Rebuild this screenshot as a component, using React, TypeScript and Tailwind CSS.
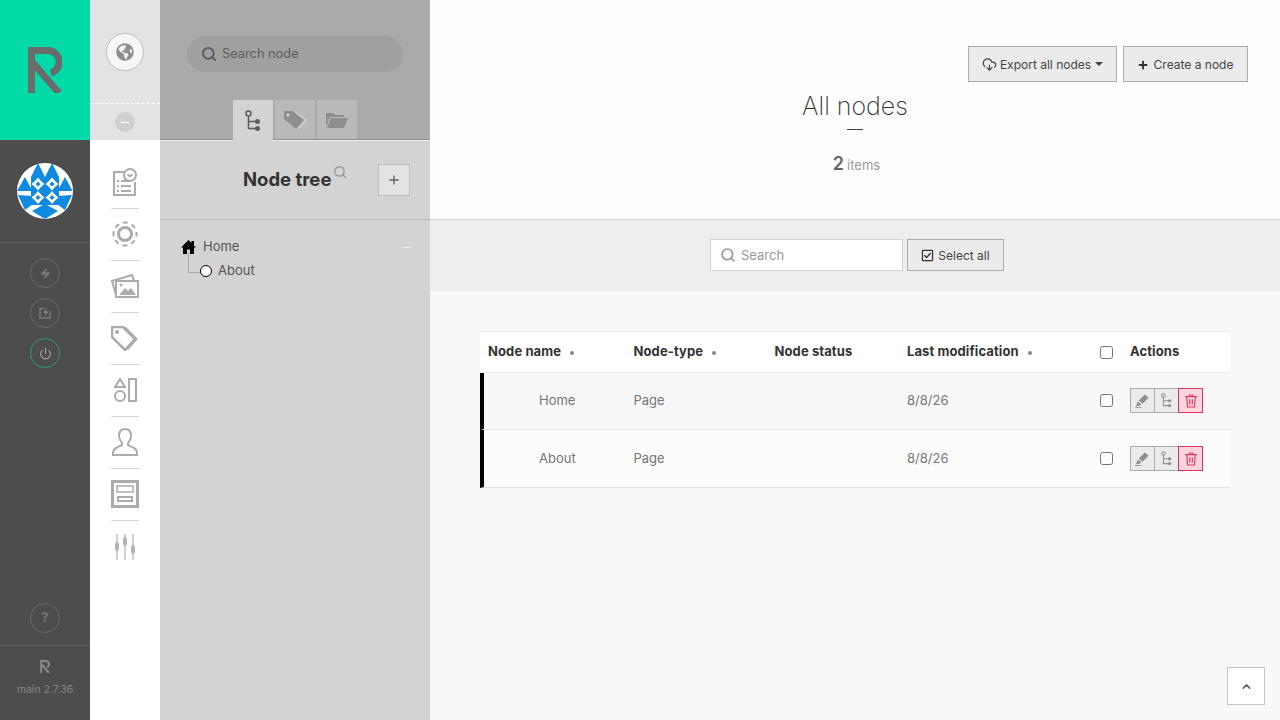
import { ChevronUp, CloudDownload, Plus, Power, Search, Zap } from "lucide-react";
import { FaGlobeAmericas, FaPlus, FaRegCheckSquare } from "react-icons/fa";

const font = { fontFamily: "Inter, 'Noto Sans', sans-serif" };

const RLogo = ({ className, color }: { className?: string; color: string }) => (
  <svg viewBox="0 0 34 46" className={className} fill="none">
    <path d="M3.500 46V3.500H20a11.500 11.500 0 0 1 3 22.500" stroke={color} strokeWidth="7" />
    <path d="M5 16l26 30" stroke={color} strokeWidth="7" />
  </svg>
);

const TreeIcon = ({ className, color }: { className?: string; color: string }) => (
  <svg viewBox="0 0 16 22" className={className} fill="none">
    <circle cx="3.500" cy="3.500" r="2.500" stroke={color} strokeWidth="1.500" />
    <path d="M3.500 6v12.500H12M3.500 11.500H12" stroke={color} strokeWidth="1.500" />
    <circle cx="12.500" cy="11.500" r="2.500" fill={color} />
    <circle cx="12.500" cy="18.500" r="2.500" fill={color} />
  </svg>
);

const TagIcon = ({ className, color }: { className?: string; color: string }) => (
  <svg viewBox="0 0 28 25" className={className}>
    <path d="M1 1h11l12 12-10 11L1 11z" fill="none" stroke={color} strokeWidth="2.500" />
    <path d="M15 1l12 12-10 11-2-2 9-9L12 1z" fill={color} />
    <circle cx="6" cy="6" r="2" fill={color} />
  </svg>
);

const PencilIcon = () => (
  <svg viewBox="0 0 16 16" className="w-[15px] h-[15px]" fill="#8f8f8f">
    <path d="M10.500 1.500l4 3.500-6.500 6.500-4-3.500z" />
    <path d="M3 9l4 3-2.500 1.500L1 14.500zM0 15h7v.8H0z" />
  </svg>
);

const TrashIcon = () => (
  <svg viewBox="0 0 14 16" className="w-[12px] h-[14px]" fill="none" stroke="#dd3b63" strokeWidth="1.400">
    <path d="M0 3h14M5 3V1h4v2M2 3l1 12h8l1-12M5.500 6v6M8.500 6v6" />
  </svg>
);

const HomeIcon = () => (
  <svg viewBox="0 0 15 14" className="w-[15px] h-[14px]" fill="#000">
    <path d="M7.500 0L15 7.500h-2V14H9V9.500H6V14H2V7.500H0z" />
    <path d="M10.500 1h2.500v5l-2.500-2.500z" />
  </svg>
);

const Avatar = () => (
  <svg viewBox="0 0 56 56" className="w-14 h-14 rounded-full">
    <rect width="56" height="56" fill="#fff" />
    {/* top and side triangles */}
    <path d="M21 0l7 14H14zM35 0l7 14H28zM8 14l7.500 14H0zM48 14l7.500 14H40.500z" fill="#0f8ae0" />
    {/* lower wings and bottom diamond */}
    <path d="M1 32l14 1 1 8-8 6zM55 32l-14 1-1 8 8 6zM15 48l13-7 13 7-13 8z" fill="#0f8ae0" />
    {/* centre block with four stars */}
    <path d="M14 14h28v28H14z" fill="#0f8ae0" />
    <path d="M21 14.500l3 3.500 3.500 3-3.500 3-3 3.500-3-3.500-3.500-3 3.500-3zM35 14.500l3 3.500 3.500 3-3.500 3-3 3.500-3-3.500-3.500-3 3.500-3zM21 28l3 3.500 3.500 3-3.500 3-3 3.500-3-3.500-3.500-3 3.500-3zM35 28l3 3.500 3.500 3-3.500 3-3 3.500-3-3.500-3.500-3 3.500-3z" fill="#fff" />
    <path d="M21 18.500l2.500 2.500-2.500 2.500-2.500-2.500zM35 18.500l2.500 2.500-2.500 2.500-2.500-2.500zM21 32l2.500 2.500-2.500 2.500-2.500-2.500zM35 32l2.500 2.500-2.500 2.500-2.500-2.500z" fill="#0f8ae0" />
  </svg>
);

const menuIcons = [
  <svg key="a" viewBox="0 0 24 28" className="w-6 h-7" fill="none" stroke="#ababab" strokeWidth="2">
    <path d="M14 4H1v23h21V14" />
    <circle cx="17" cy="7" r="6" fill="#fff" />
    <path d="M14.500 6.500l2.500 2 2.500-2M4 13h2M8 13h10M4 18h2M8 18h10M4 23h2M8 23h10" />
  </svg>,
  <svg key="b" viewBox="0 0 26 26" className="w-[26px] h-[26px]" fill="none" stroke="#ababab">
    <circle cx="13" cy="13" r="6.500" strokeWidth="3" />
    <circle cx="13" cy="13" r="11.500" strokeWidth="2" strokeDasharray="5 4.030" strokeDashoffset="2.500" />
  </svg>,
  <svg key="c" viewBox="0 0 28 24" className="w-7 h-6" fill="none" stroke="#ababab" strokeWidth="2">
    <path d="M5 21L1 7l20-6 2 6" />
    <rect x="5" y="7" width="22" height="16" fill="#fff" />
    <circle cx="10" cy="11" r="1.500" fill="#ababab" stroke="none" />
    <path d="M8 21l6-7 3 3 3-3 5 7z" fill="#ababab" stroke="none" />
  </svg>,
  <TagIcon key="d" className="w-7 h-[25px]" color="#ababab" />,
  <svg key="e" viewBox="0 0 24 24" className="w-6 h-6" fill="none" stroke="#ababab" strokeWidth="2">
    <path d="M7 1l5 8H2z" />
    <circle cx="7" cy="18" r="5" />
    <rect x="16" y="1" width="7" height="22" />
  </svg>,
  <svg key="f" viewBox="0 0 26 28" className="w-[26px] h-7" fill="none" stroke="#ababab" strokeWidth="2">
    <path d="M13 1c4 0 6 3 6 7 0 3-1.500 5-3 7v2c4 2 9 3 9 8v2H1v-2c0-5 5-6 9-8v-2C8.500 13 7 11 7 8c0-4 2-7 6-7z" />
  </svg>,
  <svg key="g" viewBox="0 0 28 28" className="w-7 h-7" fill="none" stroke="#ababab">
    <rect x="1.500" y="1.500" width="25" height="25" strokeWidth="3" />
    <rect x="6" y="6" width="16" height="6" strokeWidth="1.500" />
    <rect x="6" y="16" width="16" height="6" fill="#ababab" stroke="none" />
    <rect x="8" y="18" width="12" height="2" fill="#fff" stroke="none" />
  </svg>,
  <svg key="h" viewBox="0 0 22 26" className="w-[22px] h-[26px]" fill="#b5b5b5" stroke="#c0c0c0">
    <path d="M3 0v26M11 0v26M19 0v26" strokeWidth="1.500" />
    <rect x="1" y="8" width="4" height="9" rx="2" stroke="none" />
    <rect x="9" y="3" width="4" height="9" rx="2" stroke="none" />
    <rect x="17" y="11" width="4" height="9" rx="2" stroke="none" />
  </svg>,
];

const RoundButton = ({ children, active }: { children: React.ReactNode; active?: boolean }) => (
  <div
    className={`w-[30px] h-[30px] rounded-full border flex items-center justify-center ${
      active ? "border-[#2f9c84]" : "border-[#6b6b6b]"
    }`}
  >
    {children}
  </div>
);

const columnHead = (label: string, width: string, dot = true) => (
  <div className={`${width} flex items-center text-[13px] font-bold tracking-[0.1px] text-[#333]`}>
    {label}
    {dot && <span className="ml-[9px] mt-[1px] w-[4px] h-[4px] rounded-full bg-[#888]" />}
  </div>
);

const Row = ({ name, className }: { name: string; className: string }) => (
  <div className={`flex items-center border-b border-[#e3e3e3] border-l-4 border-l-black text-[13px] text-[#757575] ${className}`}>
    <div className="w-[149.500px] pl-[55px]">{name}</div>
    <div className="w-[273.500px]">Page</div>
    <div className="w-[193px]">8/8/26</div>
    <input type="checkbox" className="w-[13px] h-[13px] mr-[17px]" />
    <div className="flex h-[25px]">
      <div className="w-[25px] border border-[#acacac] bg-[#ebebeb] flex items-center justify-center">
        <PencilIcon />
      </div>
      <div className="w-[25px] -ml-px border border-[#acacac] bg-[#ebebeb] flex items-center justify-center">
        <TreeIcon className="w-[11px] h-[15px]" color="#8f8f8f" />
      </div>
      <div className="w-[25px] -ml-px border border-[#e0325f] bg-[#f9d6de] flex items-center justify-center">
        <TrashIcon />
      </div>
    </div>
  </div>
);

export default function App() {
  return (
    <div className="flex h-[720px] w-[1280px] overflow-hidden" style={font}>
      {/* main menu */}
      <aside className="w-[90px] shrink-0 flex flex-col bg-[#4d4d4d]">
        <div className="h-[140px] bg-[#00d9a8] flex items-center justify-center">
          <RLogo className="w-[34px] h-[46px]" color="#6b6b6b" />
        </div>
        <div className="h-[103px] border-b border-[#666] flex items-center justify-center">
          <Avatar />
        </div>
        <div className="flex flex-col items-center gap-[10px] pt-[15px]">
          <RoundButton>
            <Zap size={11} fill="#777" stroke="#777" />
          </RoundButton>
          <RoundButton>
            <svg viewBox="0 0 12 12" className="w-3 h-3" fill="none" stroke="#858585" strokeWidth="1.200">
              <path d="M5 1.500H1v9.500h10V4" />
              <path d="M8 0L4.500 6h2.500L5.500 10 9.500 4.500H7z" fill="#858585" stroke="none" />
            </svg>
          </RoundButton>
          <RoundButton active>
            <Power size={13} stroke="#a5a5a5" />
          </RoundButton>
        </div>
        <div className="mt-auto flex justify-center pb-[12px]">
          <RoundButton>
            <span className="text-[13px] font-bold text-[#767676]">?</span>
          </RoundButton>
        </div>
        <div className="h-[75px] border-t border-[#666] flex flex-col items-center pt-[14px]">
          <RLogo className="w-[10px] h-[13px]" color="#8a8a8a" />
          <span className="mt-[9px] text-[10.500px] text-[#858585]">main 2.7.36</span>
        </div>
      </aside>

      {/* icon bar */}
      <nav className="w-[70px] shrink-0 flex flex-col bg-white">
        <div className="h-[104px] bg-[#e3e3e3] flex items-center justify-center border-b border-dashed border-white">
          <div className="w-[38px] h-[38px] rounded-full bg-[#f7f7f7] border border-[#bdbdbd] flex items-center justify-center">
            <FaGlobeAmericas size={18} color="#8f8f8f" />
          </div>
        </div>
        <div className="h-[36px] bg-[#e3e3e3] flex items-center justify-center">
          <div className="w-5 h-5 rounded-full bg-[#cfcfcf] flex items-center justify-center">
            <span className="w-2 h-px bg-white" />
          </div>
        </div>
        <div className="flex flex-col items-center pt-[17px]">
          {menuIcons.map((icon, i) => (
            <div
              key={i}
              className={`w-7 h-[52px] pb-[1px] flex items-center justify-center ${i < 7 ? "border-b border-[#d6d6d6]" : ""}`}
            >
              {icon}
            </div>
          ))}
        </div>
      </nav>

      {/* tree panel */}
      <section className="w-[270px] shrink-0 flex flex-col bg-[#d3d3d3]">
        <div className="h-[140px] shrink-0 bg-[#aaaaaa] border-b border-[#8e8e8e] flex flex-col items-center">
          <div className="shrink-0 mt-[36px] w-[216px] h-[36px] rounded-full bg-[#a0a0a0] flex items-center pl-[14px] text-[12.800px] text-[#5c5c5c]">
            <Search size={16} stroke="#5c5c5c" strokeWidth={3} />
            <span className="ml-[5px]">Search node</span>
          </div>
          <div className="shrink-0 mt-[28px] flex gap-[2px]">
            <div className="relative w-10 h-[41px] bg-[#d3d3d3] flex items-center justify-center">
              <TreeIcon className="w-4 h-[22px]" color="#5c5c5c" />
            </div>
            <div className="w-10 h-[39px] bg-[#b9b9b9] flex items-center justify-center">
              <svg viewBox="0 0 24 20" className="w-[24px] h-[20px]">
                <path d="M10 1l13 9-8 9" fill="none" stroke="#d3d3d3" strokeWidth="1.500" />
                <path d="M1 1h9l11 9-8 9L1 9z" fill="#8e8e8e" />
                <circle cx="5" cy="5" r="1.500" fill="#d3d3d3" />
              </svg>
            </div>
            <div className="w-10 h-[39px] bg-[#b9b9b9] flex items-center justify-center">
              <svg viewBox="0 0 22 16" className="w-[22px] h-4" fill="#8e8e8e">
                <path d="M0 15V1h7l2 2h9v2H4z" />
                <path d="M1 16l4-10h17l-4 10z" />
              </svg>
            </div>
          </div>
        </div>
        <div className="h-[80px] border-t border-t-[#ececec] border-b border-[#b8b8b8] flex items-center pl-[83px]">
          <span className="text-[18.500px] font-bold text-[#333]">Node tree</span>
          <Search size={14} stroke="#9a9a9a" strokeWidth={2.500} className="ml-[2px] -mt-[16px]" />
          <div className="ml-[31px] w-8 h-8 bg-[#e3e3e3] border border-[#bcbcbc] flex items-center justify-center">
            <Plus size={14} stroke="#666" strokeWidth={2.500} />
          </div>
        </div>
        <div className="relative pl-[21px] pr-[20px] pt-[16px] text-[13px] text-[#555]">
          <div className="flex items-center h-[22px]">
            <HomeIcon />
            <span className="ml-[7px]">Home</span>
            <span className="ml-auto w-2 h-px bg-[#f0f0f0]" />
          </div>
          <div className="flex items-center h-[26px] pl-[19px]">
            <span className="w-3 h-3 rounded-full border border-black bg-white" />
            <span className="ml-[6px]">About</span>
          </div>
          <span className="absolute left-[28px] top-[33px] w-[12px] h-[20px] border-l border-b border-[#a8a8a8]" />
        </div>
      </section>

      {/* content */}
      <main className="flex-1 flex flex-col bg-[#f8f8f8] relative">
        <header className="h-[220px] bg-[#fdfdfd] border-b border-[#cfcfcf] pt-[46px]">
          <div className="flex justify-end gap-[6px] pr-[32px]">
            <button className="w-[149px] h-[36px] pt-[1px] bg-[#ebebeb] border border-[#acacac] flex items-center justify-center text-[12px] text-[#444]">
              <CloudDownload size={15} stroke="#444" />
              <span className="ml-[3px]">Export all nodes</span>
              <span className="ml-[4px] mb-[2px] border-x-[4px] border-x-transparent border-t-[4px] border-t-[#444]" />
            </button>
            <button className="w-[125px] h-[36px] pt-[1px] bg-[#ebebeb] border border-[#acacac] flex items-center justify-center text-[12px] text-[#444]">
              <FaPlus size={10} color="#333" />
              <span className="ml-[6px]">Create a node</span>
            </button>
          </div>
          <h1 className="mt-[8px] text-center text-[25px] leading-[32px] font-extralight text-[#333]">All nodes</h1>
          <div className="mx-auto mt-[7px] w-[16px] h-px bg-[#444]" />
          <div className="mt-[22px] pl-[3px] text-center text-[13px] text-[#999] leading-[24px]">
            <span className="text-[18px] font-semibold text-[#666] mr-[3px]">2</span>items
          </div>
        </header>
        <div className="h-[71px] pb-[1px] pl-[4px] bg-[#eeeeee] flex items-center justify-center gap-[4px]">
          <div className="w-[193px] h-[32px] bg-white border border-[#d3d3d3] flex items-center pl-[9px] text-[13px] text-[#999]">
            <Search size={16} stroke="#999" strokeWidth={2.500} />
            <span className="ml-[5px] pt-[1px]">Search</span>
          </div>
          <button className="w-[97px] h-[32px] pt-[1px] bg-[#ebebeb] border border-[#acacac] flex items-center justify-center text-[12px] text-[#444]">
            <FaRegCheckSquare size={13} color="#333" />
            <span className="ml-[4px]">Select all</span>
          </button>
        </div>
        <div className="mt-[40px] mx-[50px]">
          <div className="flex items-center h-[42px] bg-white border-y border-[#ececec] pl-[8px]">
            {columnHead("Node name", "w-[145.500px]")}
            {columnHead("Node-type", "w-[141px]")}
            {columnHead("Node status", "w-[132.500px]", false)}
            {columnHead("Last modification", "w-[193px]")}
            <input type="checkbox" className="w-[13px] h-[13px] mr-[17px]" />
            {columnHead("Actions", "w-[80px]", false)}
          </div>
          <Row name="Home" className="h-[57px] pb-[1px] bg-[#f8f8f8]" />
          <Row name="About" className="h-[58px] bg-[#fcfcfc]" />
        </div>
        <div className="absolute right-[15px] bottom-[15px] w-[38px] h-[38px] bg-white border border-[#c4c4c4] flex items-center justify-center">
          <ChevronUp size={13} stroke="#666" strokeWidth={3} />
        </div>
      </main>
    </div>
  );
}
